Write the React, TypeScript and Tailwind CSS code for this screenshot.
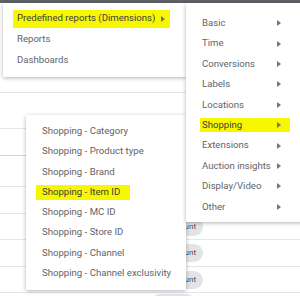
import React from "react";

const font = { fontFamily: "Roboto, 'Liberation Sans', sans-serif" };

function Arrow() {
  return (
    <svg width="4" height="6" viewBox="0 0 4 6" className="shrink-0">
      <path d="M0 0 L4 3 L0 6 Z" fill="#757575" />
    </svg>
  );
}

function Chip({ label }: { label?: string }) {
  return (
    <span className="inline-flex h-[18px] w-[44px] items-center justify-end rounded-full bg-[#e3e4e8] pr-[7px] text-[8px] text-[#4a4d52]">
      {label}
    </span>
  );
}

const rows = [
  { h: "h-[36px]", chip: false, dark: false },
  { h: "h-[27px]", chip: false, dark: true },
  { h: "h-[31px]", chip: false, dark: false },
  { h: "h-[27px]", chip: false, dark: false },
  { h: "h-[26px]", chip: true, dark: false },
  { h: "h-[27px]", chip: true, dark: false },
  { h: "h-[26px]", chip: true, dark: false },
];

const menu2 = [
  "Basic",
  "Time",
  "Conversions",
  "Labels",
  "Locations",
  "Shopping",
  "Extensions",
  "Auction insights",
  "Display/Video",
  "Other",
];

const menu3 = [
  "Shopping - Category",
  "Shopping - Product type",
  "Shopping - Brand",
  "Shopping - Item ID",
  "Shopping - MC ID",
  "Shopping - Store ID",
  "Shopping - Channel",
  "Shopping - Channel exclusivity",
];

export default function App() {
  return (
    <div className="relative h-[296px] w-[300px] overflow-hidden bg-white" style={font}>
      <div className="h-[3px] bg-[#5f6368]" />
      <div className="h-[90px] border-b border-[#e6e6e6]" />
      {rows.map((r, i) => (
        <div
          key={i}
          className={`flex items-center ${r.h} border-b ${r.dark ? "border-[#d6d6d6]" : "border-[#e6e6e6]"}`}
        >
          <div className="w-[159px] shrink-0" />
          {r.chip && <Chip label="Account" />}
        </div>
      ))}
      <div className="flex h-[10px] items-start pl-[150px]">
        <span className="mt-[1px] h-[10px] w-[46px] rounded-t-full bg-[#e3e4e8]" />
      </div>

      {/* menu 1 */}
      <div className="absolute left-[3px] top-[3px] w-[183px] whitespace-nowrap bg-white pb-[6px] pt-[5px] text-[9.6px] text-[#5f6368] shadow-[0_1px_4px_rgba(0,0,0,0.3)]">
        <div className="flex h-[21px] items-center pl-[10px]">
          <span className="flex h-[18px] w-[157px] items-center gap-[6px] bg-[#f7f700] pl-[4px] text-[#3c4043]">
            Predefined reports (Dimensions)
            <Arrow />
          </span>
        </div>
        <div className="flex h-[21px] items-center pl-[14px]">Reports</div>
        <div className="flex h-[21px] items-center pl-[14px]">Dashboards</div>
      </div>

      {/* menu 3 */}
      <div className="absolute left-[26px] top-[115px] w-[160px] whitespace-nowrap bg-white pb-[7px] pt-[6px] text-[9.6px] text-[#5f6368] shadow-[0_1px_4px_rgba(0,0,0,0.3)]">
        {menu3.map((t) => (
          <div key={t} className="flex h-[20.3px] items-center pl-[16px]">
            {t === "Shopping - Item ID" ? (
              <span className="-ml-[6px] flex h-[15px] w-[94px] items-center bg-[#f7f700] pl-[6px] text-[#3c4043]">
                {t}
              </span>
            ) : (
              t
            )}
          </div>
        ))}
      </div>

      {/* menu 2 */}
      <div className="absolute left-[186px] top-[3px] w-[130px] whitespace-nowrap bg-white pb-[5px] pt-[10px] text-[9.6px] text-[#5f6368] shadow-[0_1px_4px_rgba(0,0,0,0.3)]">
        {menu2.map((t) => (
          <div key={t} className="flex h-[20.4px] items-center pl-[14px]">
            {t === "Shopping" ? (
              <span className="flex h-[14px] w-[90px] items-center justify-between bg-[#f7f700] pl-[2px] pr-[9px] text-[#3c4043]">
                {t}
                <Arrow />
              </span>
            ) : (
              <span className="flex w-[90px] items-center justify-between pl-[2px] pr-[9px]">
                {t}
                <Arrow />
              </span>
            )}
          </div>
        ))}
      </div>
    </div>
  );
}
